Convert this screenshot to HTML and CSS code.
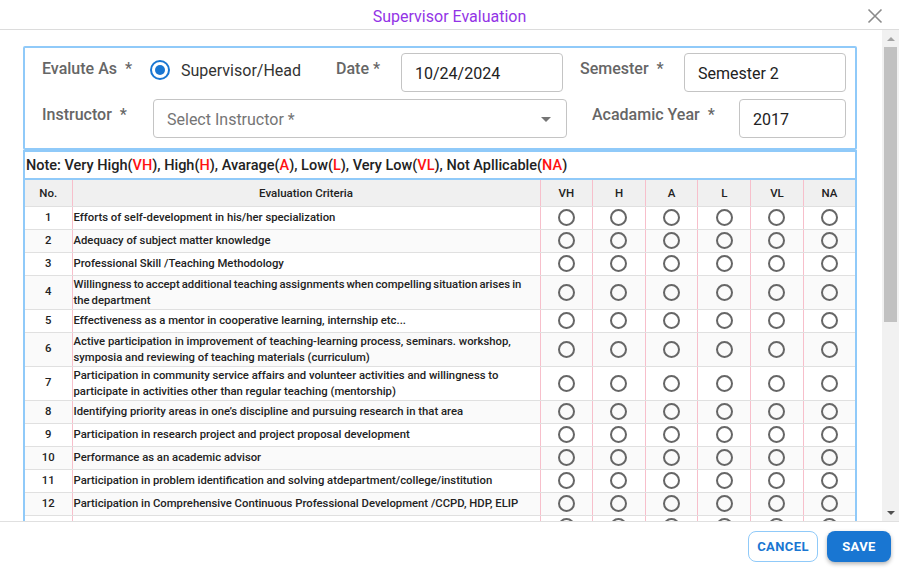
FILE: index.html
```html
<!DOCTYPE html>
<html lang="en">
<head>
<meta charset="utf-8">
<title>Supervisor Evaluation</title>
<link rel="stylesheet" href="styles.css">
</head>
<body>
<div class="dialog">
  <header class="dlg-head">
    <span></span>
    <h2 class="dlg-title">Supervisor Evaluation</h2>
    <button class="close" aria-label="Close">
      <svg width="16" height="16" viewBox="0 0 16 16"><path d="M1.5 1.5 L14.5 14.5 M14.5 1.5 L1.5 14.5" stroke="#8a8a8a" stroke-width="1.6" fill="none"/></svg>
    </button>
  </header>

  <div class="dlg-body">
    <div class="scroll">
      <div class="form-box">
        <div class="frow">
          <div class="flabel w-eval">Evalute As<span class="req">*</span></div>
          <div class="radio-group">
            <span class="radio-on"><span class="dot"></span></span>
            <span class="radio-text">Supervisor/Head</span>
          </div>
          <div class="flabel w-date">Date<span class="req sm">*</span></div>
          <div class="finput w-in">10/24/2024</div>
          <div class="flabel w-sem">Semester<span class="req">*</span></div>
          <div class="finput w-in">Semester 2</div>
        </div>
        <div class="frow">
          <div class="flabel w-instr">Instructor<span class="req">*</span></div>
          <div class="finput select w-select"><span class="ph">Select Instructor *</span><span class="caret"></span></div>
          <div class="flabel w-year">Acadamic Year<span class="req">*</span></div>
          <div class="finput w-yin">2017</div>
        </div>
      </div>

      <div class="note">Note: Very High(<span class="k">VH</span>), High(<span class="k">H</span>), Avarage(<span class="k">A</span>), Low(<span class="k">L</span>), Very Low(<span class="k">VL</span>), Not Apllicable(<span class="k">NA</span>)</div>

      <table class="eval">
        <colgroup>
          <col class="c-no"><col class="c-crit"><col class="c-r"><col class="c-r"><col class="c-r"><col class="c-r"><col class="c-r"><col class="c-r">
        </colgroup>
        <thead>
          <tr><th>No.</th><th>Evaluation Criteria</th><th>VH</th><th>H</th><th>A</th><th>L</th><th>VL</th><th>NA</th></tr>
        </thead>
        <tbody>
          <tr><td class="no">1</td><td class="crit">Efforts of self-development in his/her specialization</td><td class="r"><span class="rd"></span></td><td class="r"><span class="rd"></span></td><td class="r"><span class="rd"></span></td><td class="r"><span class="rd"></span></td><td class="r"><span class="rd"></span></td><td class="r"><span class="rd"></span></td></tr>
          <tr><td class="no">2</td><td class="crit">Adequacy of subject matter knowledge</td><td class="r"><span class="rd"></span></td><td class="r"><span class="rd"></span></td><td class="r"><span class="rd"></span></td><td class="r"><span class="rd"></span></td><td class="r"><span class="rd"></span></td><td class="r"><span class="rd"></span></td></tr>
          <tr><td class="no">3</td><td class="crit">Professional Skill /Teaching Methodology</td><td class="r"><span class="rd"></span></td><td class="r"><span class="rd"></span></td><td class="r"><span class="rd"></span></td><td class="r"><span class="rd"></span></td><td class="r"><span class="rd"></span></td><td class="r"><span class="rd"></span></td></tr>
          <tr><td class="no">4</td><td class="crit tight">Willingness to accept additional teaching assignments when compelling situation arises in<br>the department</td><td class="r"><span class="rd"></span></td><td class="r"><span class="rd"></span></td><td class="r"><span class="rd"></span></td><td class="r"><span class="rd"></span></td><td class="r"><span class="rd"></span></td><td class="r"><span class="rd"></span></td></tr>
          <tr><td class="no">5</td><td class="crit">Effectiveness as a mentor in cooperative learning, internship etc...</td><td class="r"><span class="rd"></span></td><td class="r"><span class="rd"></span></td><td class="r"><span class="rd"></span></td><td class="r"><span class="rd"></span></td><td class="r"><span class="rd"></span></td><td class="r"><span class="rd"></span></td></tr>
          <tr><td class="no">6</td><td class="crit">Active participation in improvement of teaching-learning process, seminars. workshop, symposia and reviewing of teaching materials (curriculum)</td><td class="r"><span class="rd"></span></td><td class="r"><span class="rd"></span></td><td class="r"><span class="rd"></span></td><td class="r"><span class="rd"></span></td><td class="r"><span class="rd"></span></td><td class="r"><span class="rd"></span></td></tr>
          <tr><td class="no">7</td><td class="crit">Participation in community service affairs and volunteer activities and willingness to participate in activities other than regular teaching (mentorship)</td><td class="r"><span class="rd"></span></td><td class="r"><span class="rd"></span></td><td class="r"><span class="rd"></span></td><td class="r"><span class="rd"></span></td><td class="r"><span class="rd"></span></td><td class="r"><span class="rd"></span></td></tr>
          <tr><td class="no">8</td><td class="crit">Identifying priority areas in one’s discipline and pursuing research in that area</td><td class="r"><span class="rd"></span></td><td class="r"><span class="rd"></span></td><td class="r"><span class="rd"></span></td><td class="r"><span class="rd"></span></td><td class="r"><span class="rd"></span></td><td class="r"><span class="rd"></span></td></tr>
          <tr><td class="no">9</td><td class="crit">Participation in research project and project proposal development</td><td class="r"><span class="rd"></span></td><td class="r"><span class="rd"></span></td><td class="r"><span class="rd"></span></td><td class="r"><span class="rd"></span></td><td class="r"><span class="rd"></span></td><td class="r"><span class="rd"></span></td></tr>
          <tr><td class="no">10</td><td class="crit">Performance as an academic advisor</td><td class="r"><span class="rd"></span></td><td class="r"><span class="rd"></span></td><td class="r"><span class="rd"></span></td><td class="r"><span class="rd"></span></td><td class="r"><span class="rd"></span></td><td class="r"><span class="rd"></span></td></tr>
          <tr><td class="no">11</td><td class="crit">Participation in problem identification and solving atdepartment/college/institution</td><td class="r"><span class="rd"></span></td><td class="r"><span class="rd"></span></td><td class="r"><span class="rd"></span></td><td class="r"><span class="rd"></span></td><td class="r"><span class="rd"></span></td><td class="r"><span class="rd"></span></td></tr>
          <tr><td class="no">12</td><td class="crit">Participation in Comprehensive Continuous Professional Development /CCPD, HDP, ELIP</td><td class="r"><span class="rd"></span></td><td class="r"><span class="rd"></span></td><td class="r"><span class="rd"></span></td><td class="r"><span class="rd"></span></td><td class="r"><span class="rd"></span></td><td class="r"><span class="rd"></span></td></tr>
          <tr><td class="no"></td><td class="crit"></td><td class="r"><span class="rd"></span></td><td class="r"><span class="rd"></span></td><td class="r"><span class="rd"></span></td><td class="r"><span class="rd"></span></td><td class="r"><span class="rd"></span></td><td class="r"><span class="rd"></span></td></tr>
        </tbody>
      </table>
    </div>
    <div class="sbar">
      <div class="sb-btn"><span class="tri-up"></span></div>
      <div class="sb-track"><div class="sb-thumb"></div></div>
      <div class="sb-btn"><span class="tri-down"></span></div>
    </div>
  </div>

  <footer class="dlg-foot">
    <button class="btn btn-cancel">CANCEL</button>
    <button class="btn btn-save">SAVE</button>
  </footer>
</div>
</body>
</html>
```

FILE: styles.css
```css
* { box-sizing: border-box; }
html, body { margin: 0; padding: 0; background: #fff; }
body { font-family: Roboto, "Noto Sans", Arial, sans-serif; color: #222; }

.dialog {
  width: 899px;
  height: 570px;
  display: flex;
  flex-direction: column;
  background: #fff;
  overflow: hidden;
}

/* header */
.dlg-head {
  height: 30px;
  flex: none;
  border-bottom: 1px solid #dcdcdc;
  display: grid;
  grid-template-columns: 1fr auto 1fr;
  align-items: center;
}
.dlg-title {
  margin: 0;
  font-size: 16px;
  font-weight: 400;
  line-height: 19px;
  color: #9334e6;
  padding-top: 4px;
}
.close {
  justify-self: end;
  margin-right: 16px;
  margin-top: 3px;
  width: 16px;
  height: 16px;
  padding: 0;
  border: 0;
  background: none;
  display: flex;
}

/* body */
.dlg-body {
  flex: 1;
  display: flex;
  min-height: 0;
}
.scroll {
  flex: 1;
  overflow: hidden;
  padding: 16px 25px 0 23px;
}

/* form */
.form-box {
  border: 2px solid #90caf9;
  border-radius: 2px;
  padding: 5px 9px 10px 17px;
  display: flex;
  flex-direction: column;
  gap: 7px;
}
.frow {
  display: flex;
  align-items: flex-start;
  height: 39px;
}
.flabel {
  flex: none;
  font-size: 16px;
  font-weight: 500;
  line-height: 19px;
  color: #666;
  padding-top: 6px;
  white-space: nowrap;
}
.req { margin-left: 8px; }
.req.sm { margin-left: 4px; }
.w-eval { width: 108px; }
.w-date { width: 65px; }
.w-sem { width: 104px; margin-left: 17px; }
.w-instr { width: 111px; }
.w-year { width: 147px; margin-left: 25px; }

.radio-group {
  flex: none;
  width: 186px;
  display: flex;
  align-items: center;
  gap: 11px;
  height: 34px;
}
.radio-on {
  width: 20px;
  height: 20px;
  border: 2px solid #1976d2;
  border-radius: 50%;
  display: flex;
  align-items: center;
  justify-content: center;
}
.radio-on .dot {
  width: 10px;
  height: 10px;
  border-radius: 50%;
  background: #1976d2;
}
.radio-text { font-size: 16px; color: #333; }

.finput {
  flex: none;
  height: 39px;
  border: 1px solid #c4c4c4;
  border-radius: 4px;
  padding: 0 13px;
  font-size: 16px;
  color: #222;
  display: flex;
  align-items: center;
  padding-top: 2px;
}
.w-in { width: 162px; }
.w-select { width: 414px; }
.w-yin { width: 107px; }
.select { justify-content: space-between; padding-right: 15px; }
.select .ph { color: #757575; }
.caret {
  width: 0;
  height: 0;
  border-left: 5px solid transparent;
  border-right: 5px solid transparent;
  border-top: 5px solid #757575;
}

/* note */
.note {
  border: 2px solid #90caf9;
  height: 30px;
  padding-left: 1px;
  display: flex;
  align-items: center;
  font-size: 14.5px;
  font-weight: 500;
  color: #222;
  white-space: nowrap;
}
.note .k { color: #ff1212; }

/* table */
.eval {
  width: 100%;
  border-collapse: collapse;
  table-layout: fixed;
  border-left: 2px solid #90caf9;
  border-right: 2px solid #90caf9;
  font-size: 11.3px;
  font-weight: 500;
  color: #222;
}
.c-no { width: 48px; }
.c-crit { width: 468px; }
.eval th {
  height: 26px;
  background: #f0f0f0;
  font-size: 11.5px;
  font-weight: 500;
  text-align: center;
  border-right: 1px solid #f7bfcb;
  border-bottom: 1px solid #e0e0e0;
  padding: 0;
}
.eval td {
  border-right: 1px solid #f7bfcb;
  border-bottom: 1px solid #e0e0e0;
  vertical-align: middle;
  line-height: 16px;
}
.eval th:last-child, .eval td:last-child { border-right: 0; }
.eval tbody tr:nth-child(even) td { background: #fafafa; }
.eval td.no { text-align: center; padding: 1px 0; }
.eval td.crit { padding: 1px 0 0 1px; }
.eval td.crit.tight { word-spacing: -0.8px; }
.eval td.r { padding: 1px 0; }
.rd {
  display: block;
  width: 17px;
  height: 17px;
  margin: 1.5px auto;
  border: 2px solid #666;
  border-radius: 50%;
}

/* fake scrollbar */
.sbar {
  flex: none;
  width: 17px;
  background: #f1f1f1;
  display: flex;
  flex-direction: column;
}
.sb-btn {
  height: 17px;
  display: flex;
  align-items: center;
  justify-content: center;
}
.tri-up {
  width: 0; height: 0;
  border-left: 4px solid transparent;
  border-right: 4px solid transparent;
  border-bottom: 4px solid #a3a3a3;
}
.tri-down {
  width: 0; height: 0;
  border-left: 4px solid transparent;
  border-right: 4px solid transparent;
  border-top: 4px solid #505050;
}
.sb-track { flex: 1; padding: 0 2px; }
.sb-thumb { height: 275px; background: #c1c1c1; }

/* footer */
.dlg-foot {
  height: 49px;
  flex: none;
  border-top: 1px solid #e0e0e0;
  display: flex;
  align-items: center;
  justify-content: flex-end;
  gap: 9px;
  padding-right: 8px;
}
.btn {
  height: 31px;
  border-radius: 8px;
  font-family: Roboto, "Noto Sans", Arial, sans-serif;
  font-size: 13px;
  font-weight: 700;
  letter-spacing: 0.4px;
  padding: 0;
  cursor: pointer;
}
.btn-cancel {
  width: 70px;
  background: #fff;
  color: #1976d2;
  border: 1px solid #90caf9;
}
.btn-save {
  width: 64px;
  background: #1976d2;
  color: #fff;
  border: 0;
  box-shadow: 0 2px 4px rgba(0,0,0,0.3);
}
```
